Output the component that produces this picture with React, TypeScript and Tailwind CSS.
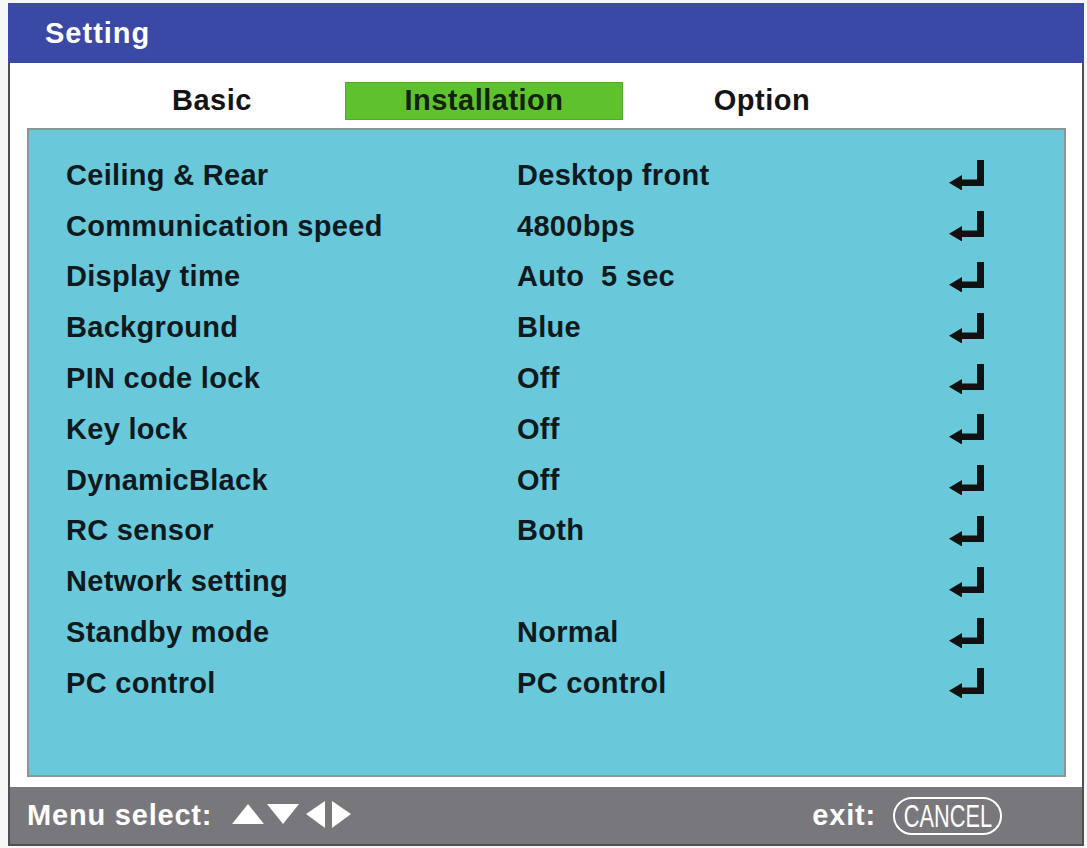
import React from "react";

const rows: [string, string][] = [
  ["Ceiling & Rear", "Desktop front"],
  ["Communication speed", "4800bps"],
  ["Display time", "Auto  5 sec"],
  ["Background", "Blue"],
  ["PIN code lock", "Off"],
  ["Key lock", "Off"],
  ["DynamicBlack", "Off"],
  ["RC sensor", "Both"],
  ["Network setting", ""],
  ["Standby mode", "Normal"],
  ["PC control", "PC control"],
];

function EnterIcon() {
  return (
    <svg width="36" height="30" viewBox="0 0 36 30" className="block">
      <rect x="28" y="0" width="7" height="26" fill="#111" />
      <rect x="10" y="19.5" width="25" height="6.5" fill="#111" />
      <polygon points="0,22.75 13,15 13,30.5" fill="#111" />
    </svg>
  );
}

export default function App() {
  const font = { fontFamily: '"Liberation Sans", Arial, sans-serif' };
  return (
    <div className="w-[1087px] h-[848px] bg-[#f7f7f7] pt-[3px] pl-[8px]" style={font}>
      <div className="w-[1076px] h-[843px] flex flex-col border-x-2 border-b-2 border-[#505050] bg-white">
        {/* Title bar */}
        <div className="h-[60px] bg-[#3b49a6] flex items-center pl-[35px] -mx-[2px] px-[2px]">
          <span className="text-white font-bold text-[29px] tracking-[1px] leading-none ml-[2px]">Setting</span>
        </div>
        {/* White body */}
        <div className="h-[724px] flex flex-col">
          {/* Tabs */}
          <div className="flex pt-[19px] pl-[57px] h-[65px]">
            <div className="w-[278px] h-[38px] flex items-center justify-center pl-[12px] text-[29px] font-bold tracking-[0.5px] text-[#141414]">
              Basic
            </div>
            <div className="w-[278px] h-[38px] flex items-center justify-center bg-[#5ec22d] border border-[#4eaa24] text-[29px] font-bold tracking-[0.5px] text-[#14220c]">
              Installation
            </div>
            <div className="w-[278px] h-[38px] flex items-center justify-center text-[29px] font-bold tracking-[0.5px] text-[#141414]">
              Option
            </div>
          </div>
          {/* Cyan panel */}
          <div className="ml-[17px] w-[1039px] h-[649px] bg-[#69c9da] border-2 border-[#8b9898] pt-[20px] pl-[37px]">
            {rows.map(([label, value]) => (
              <div key={label} className="grid grid-cols-[451px_432px_36px] h-[50.8px] items-center text-[29px] font-bold tracking-[0.3px] text-[#101a1e] leading-none">
                <span>{label}</span>
                <span className="whitespace-pre">{value}</span>
                <EnterIcon />
              </div>
            ))}
          </div>
        </div>
        {/* Footer */}
        <div className="flex-1 bg-[#78787c] flex items-center pl-[17px] pr-[80px] text-white">
          <span className="text-[29px] font-bold tracking-[0.8px] leading-none">Menu select:</span>
          <svg width="122" height="30" viewBox="0 0 122 30" className="ml-[20px] block">
            <polygon points="16,3 32,23 0,23" fill="#fff" />
            <polygon points="35,3 67,3 51,23" fill="#fff" />
            <polygon points="74,13 93,0 93,27" fill="#fff" />
            <polygon points="100,0 119,13 100,27" fill="#fff" />
          </svg>
          <div className="flex-1" />
          <span className="text-[29px] font-bold tracking-[0.8px] leading-none">exit:</span>
          <div className="ml-[17px] w-[109px] h-[38px] rounded-full border-2 border-white flex items-center justify-center overflow-hidden">
            <span className="text-[32px] leading-none scale-x-[0.68] inline-block">CANCEL</span>
          </div>
        </div>
      </div>
    </div>
  );
}
